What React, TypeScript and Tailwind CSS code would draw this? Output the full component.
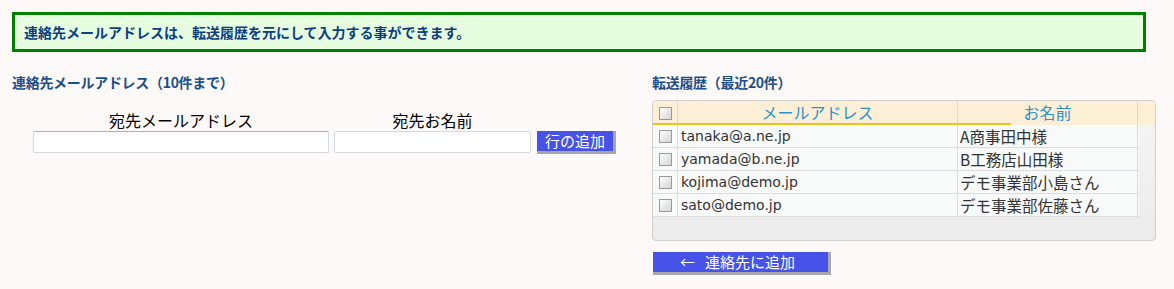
import React from "react";

const history = [
  { mail: "tanaka@a.ne.jp", name: "A商事田中様" },
  { mail: "yamada@b.ne.jp", name: "B工務店山田様" },
  { mail: "kojima@demo.jp", name: "デモ事業部小島さん" },
  { mail: "sato@demo.jp", name: "デモ事業部佐藤さん" },
];

const jp = "font-['Noto_Sans_CJK_JP',sans-serif]";

function Check() {
  return (
    <span className="block h-[13px] w-[13px] border border-[#9a9a9a] bg-gradient-to-br from-[#ffffff] to-[#d4d4d4]" />
  );
}

export default function App() {
  return (
    <div className={`min-h-screen w-[1174px] bg-[#fdf9f9] pt-[12px] ${jp}`}>
      <div className="mx-[12px] flex h-[40px] w-[1134px] items-center border-[3px] border-[#008000] bg-[#e6fde0] pl-[9px]">
        <span className="text-[14px] font-bold leading-none text-[#0b3d80]">
          連絡先メールアドレスは、転送履歴を元にして入力する事ができます。
        </span>
      </div>

      <div className="mt-[20px] flex pl-[12px]">
        {/* left: contacts */}
        <div className="w-[640px]">
          <div className="h-[20px] text-[14px] font-bold leading-[20px] text-[#1b4e8a] tracking-[-0.3px]">連絡先メールアドレス（10件まで）</div>
          <div className="mt-[17px] pl-[21px]">
            <div className="flex h-[22px] text-[16px] leading-[22px] text-black">
              <div className="w-[296px] text-center">宛先メールアドレス</div>
              <div className="ml-[5px] w-[197px] text-center">宛先お名前</div>
            </div>
            <div className="flex items-start">
              <input className="h-[22px] w-[296px] rounded-[2px] border border-[#d4d8e0] border-t-[#b0b0b0] bg-white outline-none" />
              <input className="ml-[5px] h-[22px] w-[197px] rounded-[2px] border border-[#d4d8e0] bg-white outline-none" />
              <button className="ml-[6px] h-[23px] w-[79px] border-r-[3px] border-b-[3px] border-[#a8a8a8] bg-[#4652e8] text-[15px] leading-[20px] text-white">
                行の追加
              </button>
            </div>
          </div>
        </div>

        {/* right: history */}
        <div className="w-[504px]">
          <div className="h-[20px] text-[14px] font-bold leading-[20px] text-[#1b4e8a] tracking-[-0.3px]">転送履歴（最近20件）</div>
          <div className="mt-[8px] h-[141px] overflow-hidden rounded-[4px] border border-[#cfcfcf] bg-gradient-to-b from-[#f6f6f6] to-[#ebebeb]">
            <div className="relative flex h-[24px] bg-[#fdefd6] text-[16px] leading-[22px] text-[#2b93c8]">
              <div className="flex w-[25px] items-center justify-center border-r border-[#d8d8d8]">
                <Check />
              </div>
              <div className="w-[280px] border-r border-[#d8d8d8] text-center">メールアドレス</div>
              <div className="w-[180px] border-r border-[#d8d8d8] text-center">お名前</div>
              <div className="flex-1" />
              <span className="absolute bottom-0 left-0 h-[2px] w-[358px] bg-[#f3c21a]" />
            </div>
            {history.map((h) => (
              <div key={h.mail} className="flex h-[23px] w-[486px] border-b border-[#dcdcdc] bg-[#f8f9f9] text-[#333]">
                <div className="flex w-[25px] items-center justify-center border-r border-[#dcdcdc]">
                  <Check />
                </div>
                <div className="w-[280px] border-r border-[#dcdcdc] pl-[3px] font-['DejaVu_Sans',sans-serif] text-[14px] leading-[22px]">
                  {h.mail}
                </div>
                <div className="w-[180px] border-r border-[#dcdcdc] pl-[2px] text-[15.5px] leading-[22px]">{h.name}</div>
              </div>
            ))}
          </div>
          <button className="mt-[11px] ml-[1px] flex h-[23px] w-[178px] items-center border-r-[3px] border-b-[3px] border-[#a8a8a8] bg-[#4652e8] pl-[27px] text-[15px] leading-[20px] text-white">
            <span className="mr-[10px]">←</span>連絡先に追加
          </button>
        </div>
      </div>
    </div>
  );
}
